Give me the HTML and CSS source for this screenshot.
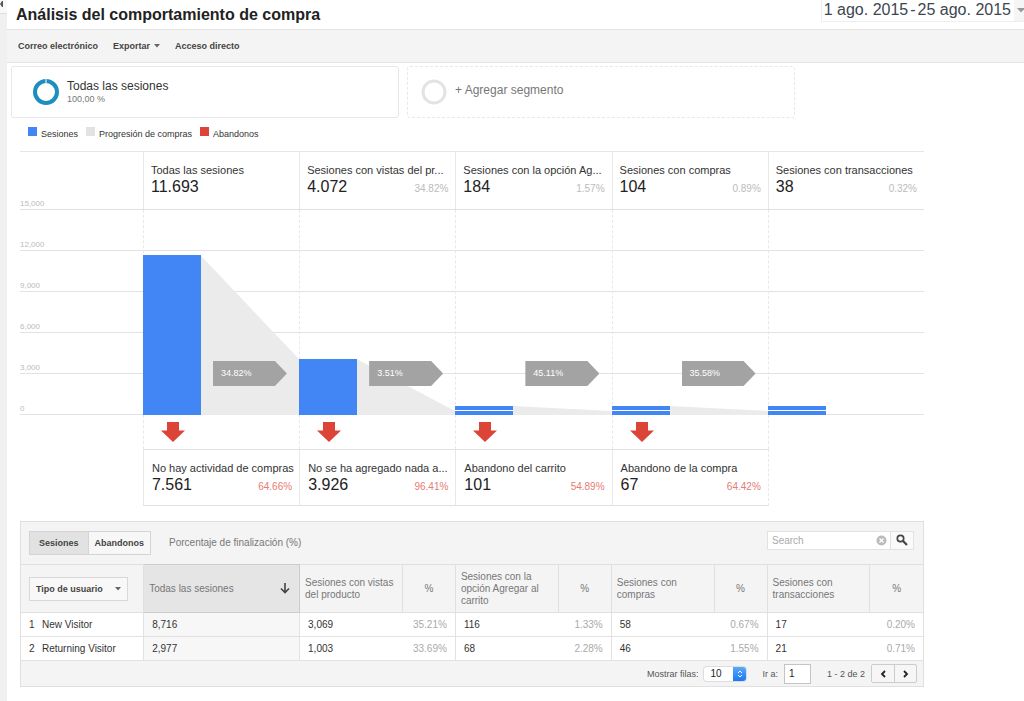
FILE: index.html
```html
<!DOCTYPE html>
<html lang="es">
<head>
<meta charset="utf-8">
<title>Análisis del comportamiento de compra</title>
<link rel="stylesheet" href="styles.css">
</head>
<body>
<div class="app">
  <aside class="rail">
    <button class="rail-toggle" aria-label="Mostrar menú"><svg width="4" height="8" viewBox="0 0 4 8"><path d="M0 4l2-3v6z" fill="#555"/><path d="M2.500 1v6" stroke="#555" stroke-width="1"/></svg></button>
  </aside>
  <div class="page">
    <header class="header">
      <h1 class="title">Análisis del comportamiento de compra</h1>
      <button class="date-range"><span class="date-text"><span>1 ago. 2015</span><span>-</span><span>25 ago. 2015</span></span><span class="date-caret"><svg width="8" height="5" viewBox="0 0 8 5"><path d="M0 0h8l-4 4.500z" fill="#999"/></svg></span></button>
    </header>
    <nav class="actions">
      <button class="action">Correo electrónico</button>
      <button class="action">Exportar <svg width="6" height="4" viewBox="0 0 6 4"><path d="M0 0h6L3 3.500z" fill="#666"/></svg></button>
      <button class="action">Acceso directo</button>
    </nav>

    <section class="segments">
      <div class="segment">
        <svg width="28" height="28" viewBox="0 0 28 28"><circle cx="14" cy="14" r="11" fill="none" stroke="#1c8fc0" stroke-width="4"/><path d="M14 0v5" stroke="#fff" stroke-width="1"/></svg>
        <div>
          <div class="segment-name">Todas las sesiones</div>
          <div class="segment-share">100,00 %</div>
        </div>
      </div>
      <button class="segment segment-add">
        <svg width="28" height="28" viewBox="0 0 28 28"><circle cx="14" cy="14" r="11" fill="none" stroke="#e3e3e3" stroke-width="3"/></svg>
        <span>+ Agregar segmento</span>
      </button>
    </section>

    <main class="report">
      <ul class="legend">
        <li><span class="swatch swatch-sessions"></span>Sesiones</li>
        <li><span class="swatch swatch-progress"></span>Progresión de compras</li>
        <li><span class="swatch swatch-drop"></span>Abandonos</li>
      </ul>

      <section class="funnel">
        <div class="funnel-row funnel-head">
          <div class="axis-top">15,000</div>
          <div class="stat"><div class="stat-name">Todas las sesiones</div><div class="stat-line"><span class="stat-value">11.693</span></div></div>
          <div class="stat"><div class="stat-name">Sesiones con vistas del pr...</div><div class="stat-line"><span class="stat-value">4.072</span><span class="stat-pct">34.82%</span></div></div>
          <div class="stat"><div class="stat-name">Sesiones con la opción Ag...</div><div class="stat-line"><span class="stat-value">184</span><span class="stat-pct">1.57%</span></div></div>
          <div class="stat"><div class="stat-name">Sesiones con compras</div><div class="stat-line"><span class="stat-value">104</span><span class="stat-pct">0.89%</span></div></div>
          <div class="stat"><div class="stat-name">Sesiones con transacciones</div><div class="stat-line"><span class="stat-value">38</span><span class="stat-pct">0.32%</span></div></div>
        </div>
        <div class="plot">
          <div class="axis">
            <div class="tick">12,000</div>
            <div class="tick">9,000</div>
            <div class="tick">6,000</div>
            <div class="tick">3,000</div>
            <div class="tick">0</div>
          </div>
          <div class="funnel-row steps">
            <div></div>
            <div class="step">
              <div class="bar" style="height:160px"></div>
              <svg class="flow" viewBox="0 0 100 206" preserveAspectRatio="none"><path d="M0 46L100 150V206H0z" fill="#ebebeb"/></svg>
              <div class="tag">34.82%</div>
            </div>
            <div class="step">
              <div class="bar" style="height:56px"></div>
              <svg class="flow" viewBox="0 0 100 206" preserveAspectRatio="none"><path d="M0 150L100 202V206H0z" fill="#ebebeb"/></svg>
              <div class="tag">3.51%</div>
            </div>
            <div class="step">
              <div class="bar bar-broken"></div>
              <svg class="flow" viewBox="0 0 100 206" preserveAspectRatio="none"><path d="M0 197L100 202V206H0z" fill="#ebebeb"/></svg>
              <div class="tag">45.11%</div>
            </div>
            <div class="step">
              <div class="bar bar-broken"></div>
              <svg class="flow" viewBox="0 0 100 206" preserveAspectRatio="none"><path d="M0 197L100 202V206H0z" fill="#ebebeb"/></svg>
              <div class="tag">35.58%</div>
            </div>
            <div class="step">
              <div class="bar bar-broken"></div>
            </div>
          </div>
        </div>
        <div class="funnel-row arrows">
          <div></div>
          <div class="exit"><svg width="24" height="20" viewBox="0 0 24 20"><path d="M6 0h12v8.500h6L12 20 0 8.500h6z" fill="#db4437"/></svg></div>
          <div class="exit"><svg width="24" height="20" viewBox="0 0 24 20"><path d="M6 0h12v8.500h6L12 20 0 8.500h6z" fill="#db4437"/></svg></div>
          <div class="exit"><svg width="24" height="20" viewBox="0 0 24 20"><path d="M6 0h12v8.500h6L12 20 0 8.500h6z" fill="#db4437"/></svg></div>
          <div class="exit"><svg width="24" height="20" viewBox="0 0 24 20"><path d="M6 0h12v8.500h6L12 20 0 8.500h6z" fill="#db4437"/></svg></div>
          <div class="exit"></div>
        </div>
        <div class="funnel-row drops">
          <div></div>
          <div class="stat drop"><div class="stat-name">No hay actividad de compras</div><div class="stat-line"><span class="stat-value">7.561</span><span class="stat-pct">64.66%</span></div></div>
          <div class="stat drop"><div class="stat-name">No se ha agregado nada a...</div><div class="stat-line"><span class="stat-value">3.926</span><span class="stat-pct">96.41%</span></div></div>
          <div class="stat drop"><div class="stat-name">Abandono del carrito</div><div class="stat-line"><span class="stat-value">101</span><span class="stat-pct">54.89%</span></div></div>
          <div class="stat drop"><div class="stat-name">Abandono de la compra</div><div class="stat-line"><span class="stat-value">67</span><span class="stat-pct">64.42%</span></div></div>
          <div class="drops-end"></div>
        </div>
      </section>

      <section class="panel">
        <div class="panel-bar">
          <div class="toggle">
            <button class="toggle-item toggle-on">Sesiones</button><button class="toggle-item">Abandonos</button>
          </div>
          <span class="panel-note">Porcentaje de finalización (%)</span>
          <form class="search">
            <input class="search-input" type="text" placeholder="Search" aria-label="Search">
            <button class="search-clear" type="reset" aria-label="Borrar"><svg width="11" height="11" viewBox="0 0 11 11"><circle cx="5.500" cy="5.500" r="5" fill="#bbb"/><path d="M3.500 3.500l4 4m0-4l-4 4" stroke="#fff" stroke-width="1.300"/></svg></button>
            <button class="search-go" type="button" aria-label="Buscar"><svg width="12" height="12" viewBox="0 0 12 12"><circle cx="4.500" cy="4.500" r="3.200" fill="none" stroke="#444" stroke-width="1.700"/><path d="M6.800 6.800L11 11" stroke="#444" stroke-width="2.200"/></svg></button>
          </form>
        </div>
        <table class="data">
          <colgroup>
            <col class="c-type"><col class="c-all"><col class="c-num"><col class="c-pct"><col class="c-num"><col class="c-pct"><col class="c-num"><col class="c-pct"><col class="c-num"><col class="c-pct">
          </colgroup>
          <thead>
            <tr>
              <th class="th-type"><span class="picker"><select class="picker-select" aria-label="Dimensión"><option>Tipo de usuario</option></select><svg width="6" height="4" viewBox="0 0 6 4"><path d="M0 0h6L3 3.500z" fill="#666"/></svg></span></th>
              <th class="th-sorted"><span class="sort">Todas las sesiones<svg width="10" height="11" viewBox="0 0 10 11"><path d="M5 0v9.500M1 5.500l4 4 4-4" fill="none" stroke="#444" stroke-width="1.600"/></svg></span></th>
              <th>Sesiones con vistas del producto</th><th class="th-pct">%</th>
              <th>Sesiones con la opción Agregar al carrito</th><th class="th-pct">%</th>
              <th>Sesiones con compras</th><th class="th-pct">%</th>
              <th>Sesiones con transacciones</th><th class="th-pct">%</th>
            </tr>
          </thead>
          <tbody>
            <tr><td><span class="index">1</span>New Visitor</td><td class="td-sorted">8,716</td><td>3,069</td><td class="td-pct">35.21%</td><td>116</td><td class="td-pct">1.33%</td><td>58</td><td class="td-pct">0.67%</td><td>17</td><td class="td-pct">0.20%</td></tr>
            <tr><td><span class="index">2</span>Returning Visitor</td><td class="td-sorted">2,977</td><td>1,003</td><td class="td-pct">33.69%</td><td>68</td><td class="td-pct">2.28%</td><td>46</td><td class="td-pct">1.55%</td><td>21</td><td class="td-pct">0.71%</td></tr>
          </tbody>
        </table>
        <div class="pager">
          <label for="rows">Mostrar filas:</label>
          <span class="rows"><select class="rows-select" id="rows"><option>10</option></select><span class="rows-knob"><svg width="6" height="8" viewBox="0 0 6 8"><path d="M1 3l2-2 2 2M1 5l2 2 2-2" fill="none" stroke="#fff" stroke-width="1"/></svg></span></span>
          <label for="goto">Ir a:</label>
          <input class="goto" id="goto" type="text" value="1">
          <span class="range">1 - 2 de 2</span>
          <span class="pages"><button class="page-btn" aria-label="Anterior"><svg width="6" height="8" viewBox="0 0 6 8"><path d="M5 1L2 4l3 3" fill="none" stroke="#222" stroke-width="1.800"/></svg></button><button class="page-btn" aria-label="Siguiente"><svg width="6" height="8" viewBox="0 0 6 8"><path d="M1 1l3 3-3 3" fill="none" stroke="#222" stroke-width="1.800"/></svg></button></span>
        </div>
      </section>
    </main>
  </div>
</div>
</body>
</html>
```

FILE: styles.css
```css
* { box-sizing: border-box; }
body {
  margin: 0;
  background: #fff;
  color: #333;
  font: 10px/12px "Liberation Sans", Arial, sans-serif;
}
button, input, select { font: inherit; color: inherit; margin: 0; }
button { border: 0; padding: 0; background: none; white-space: nowrap; }
svg { display: block; flex: none; }
ul { list-style: none; margin: 0; padding: 0; }

.app { display: flex; min-height: 100vh; }
.rail { flex: none; width: 7px; background: #f0f0f0; }
.rail-toggle { display: block; width: 7px; height: 14px; background: #f8f8f8; border-bottom: 1px solid #ddd; }
.rail-toggle svg { margin-bottom: 5px; }
.page { flex: 1; min-width: 0; }

.header { display: flex; justify-content: space-between; align-items: flex-start; height: 29px; padding-left: 9px; }
.title { margin: 0; padding-top: 5px; font-size: 16px; line-height: 20px; color: #222; }
.date-range { display: flex; height: 22px; border: 1px solid #eee; border-top: 0; border-right: 0; }
.date-text { display: flex; gap: 2px; padding: 0 3px 0 2px; font-size: 16px; line-height: 19px; color: #3c4650; }
.date-caret { display: flex; align-items: center; width: 10px; height: 21px; padding-left: 3px; background: #f5f5f5; overflow: hidden; }

.actions { display: flex; align-items: center; gap: 15px; height: 34px; padding-left: 11px; background: #f4f4f4; border-top: 1px solid #e2e2e2; border-bottom: 1px solid #e2e2e2; }
.action { display: flex; align-items: center; gap: 4px; font-size: 9px; font-weight: bold; color: #444; }

.segments { display: grid; grid-template-columns: repeat(2, minmax(0, 388px)); gap: 8px; padding: 3px 4px 0; }
.segment { display: flex; align-items: center; gap: 7px; height: 52px; padding-left: 20px; border: 1px solid #e8e8e8; border-radius: 3px; text-align: left; }
.segment-name { font-size: 12px; line-height: 13px; }
.segment-share { font-size: 9px; line-height: 12px; color: #777; }
.segment-add { padding-left: 12px; border-style: dashed; font-size: 12px; color: #777; }
.segment-add span { padding-bottom: 4px; }

.report { padding: 0 100px 14px 13px; }
.legend { display: flex; gap: 8px; height: 33px; padding: 9px 0 0 8px; font-size: 9px; }
.legend li { display: flex; gap: 4px; height: 12px; line-height: 14px; }
.swatch { width: 9px; height: 9px; }
.swatch-sessions { background: #4285f4; }
.swatch-progress { background: #e2e2e2; }
.swatch-drop { background: #db4437; }

.funnel-row { display: grid; grid-template-columns: 1360fr repeat(5, minmax(0, 1728fr)); }
.funnel-head { height: 59px; border-top: 1px solid #e6e6e6; border-bottom: 1px solid #e0e0e0; }
.axis-top { align-self: end; font-size: 8px; line-height: 10px; color: #bbb; }
.stat { min-width: 0; padding: 11px 7px 0; border-left: 1px solid #e8e8e8; }
.stat-name { font-size: 11px; line-height: 14px; white-space: nowrap; }
.stat-line { display: flex; justify-content: space-between; align-items: baseline; line-height: 20px; }
.stat-value { font-size: 16px; color: #222; }
.stat-pct { color: #bbb; }

.plot { display: grid; }
.axis, .steps { grid-area: 1 / 1; }
.tick { display: flex; align-items: flex-end; height: 41px; border-bottom: 1px solid #e2e2e2; font-size: 8px; line-height: 10px; color: #bbb; }
.step { display: grid; grid-template-columns: 57px minmax(0, 1fr); align-items: end; border-left: 1px dashed #e8e8e8; }
.bar { grid-area: 1 / 1; margin-left: -1px; background: #4285f4; }
.bar-broken { height: 9px; background: linear-gradient(#4285f4 4px, #fff 4px, #fff 5px, #4285f4 5px); }
.flow { grid-area: 1 / 2; width: 100%; height: 205px; }
.tag { grid-area: 1 / 2; z-index: 1; width: 74px; height: 25px; margin: 0 0 29px 12px; padding-left: 8px; background: #a3a3a3; color: #fff; font-size: 9px; line-height: 25px; clip-path: polygon(0 0, 62px 0, 100% 50%, 62px 100%, 0 100%); }
.exit { height: 34px; padding: 7px 0 0 17px; border-left: 1px dashed #e8e8e8; }
.drop { height: 57px; padding-left: 8px; border-top: 1px solid #e2e2e2; border-bottom: 1px solid #e2e2e2; }
.drop .stat-pct { color: #e67c73; }
.drops-end { border-left: 1px dashed #e8e8e8; }

.panel { margin-top: 15px; background: #f4f4f4; border: 1px solid #e0e0e0; }
.panel-bar { display: flex; align-items: center; height: 42px; padding: 0 9px 0 8px; }
.toggle { display: flex; border: 1px solid #d4d4d4; }
.toggle-item { height: 22px; padding: 0 6px; background: #f7f7f7; font-size: 9px; font-weight: bold; color: #444; }
.toggle-on { padding: 0 9px; background: #e2e2e2; border-right: 1px solid #d4d4d4; }
.panel-note { flex: 1; padding-left: 18px; color: #777; }
.search { display: flex; align-items: center; height: 19px; margin-bottom: 6px; background: #fff; border: 1px solid #e2e2e2; }
.search-input { width: 108px; height: 17px; padding: 0 4px; border: 0; background: none; }
.search-input::placeholder { color: #aaa; opacity: 1; }
.search-clear { padding-right: 3px; }
.search-go { display: grid; place-items: center; width: 23px; height: 17px; border-left: 1px solid #e2e2e2; background: #fafafa; }

.data { width: 100%; table-layout: fixed; border-collapse: collapse; }
.c-type { width: 13.6%; }
.c-all { width: 17.28%; }
.c-num { width: 11.4%; }
.c-pct { width: 5.88%; }
.data th { height: 48px; padding: 0 5px; border: 1px solid #e0e0e0; font-weight: normal; text-align: left; color: #777; }
.data th:first-child, .data td:first-child { border-left: 0; }
.data th:last-child, .data td:last-child { border-right: 0; }
.data .th-type { padding: 0 8px; }
.data .th-sorted { background: #e5e5e5; border-color: #ccc; }
.data .th-pct { padding: 0; text-align: center; }
.sort { display: flex; justify-content: space-between; align-items: center; padding-right: 4px; }
.data td { height: 24px; padding: 0 8px; background: #fff; border-top: 1px solid #e2e2e2; border-bottom: 1px solid #e2e2e2; border-left: 1px solid #e2e2e2; white-space: nowrap; }
.data .td-sorted { background: #f7f7f7; }
.data .td-pct { border-left: 0; padding-left: 0; color: #aaa; text-align: right; }
.index { display: inline-block; width: 13px; }
.picker { display: grid; align-items: center; width: 99px; height: 24px; border: 1px solid #d8d8d8; background: #f8f8f8; }
.picker-select { grid-area: 1 / 1; height: 22px; padding: 0 6px; appearance: none; border: 0; background: none; font-size: 9px; font-weight: bold; color: #444; }
.picker svg { grid-area: 1 / 1; justify-self: end; margin-right: 6px; pointer-events: none; }

.pager { display: flex; align-items: center; justify-content: flex-end; height: 25px; padding-right: 6px; font-size: 9px; color: #555; }
.rows { display: flex; height: 14px; width: 42px; margin: 0 16px 0 6px; border-radius: 3px; overflow: hidden; background: #fff; box-shadow: 0 0 0 1px #ddd; }
.rows-select { flex: 1; min-width: 0; padding: 0 0 0 6px; appearance: none; border: 0; background: none; font-size: 10px; color: #222; }
.rows-knob { display: grid; place-items: center; width: 13px; background: linear-gradient(#5aa9fa, #1a78f2); }
.goto { width: 27px; height: 20px; margin: 0 16px 0 6px; padding: 0 4px; border: 1px solid #c4c4c4; background: #fff; font-size: 10px; color: #222; }
.pages { display: flex; margin-left: 6px; border: 1px solid #ccc; border-radius: 2px; background: #f6f6f6; }
.page-btn { display: grid; place-items: center; width: 22px; height: 17px; }
.page-btn + .page-btn { border-left: 1px solid #ccc; }
```
